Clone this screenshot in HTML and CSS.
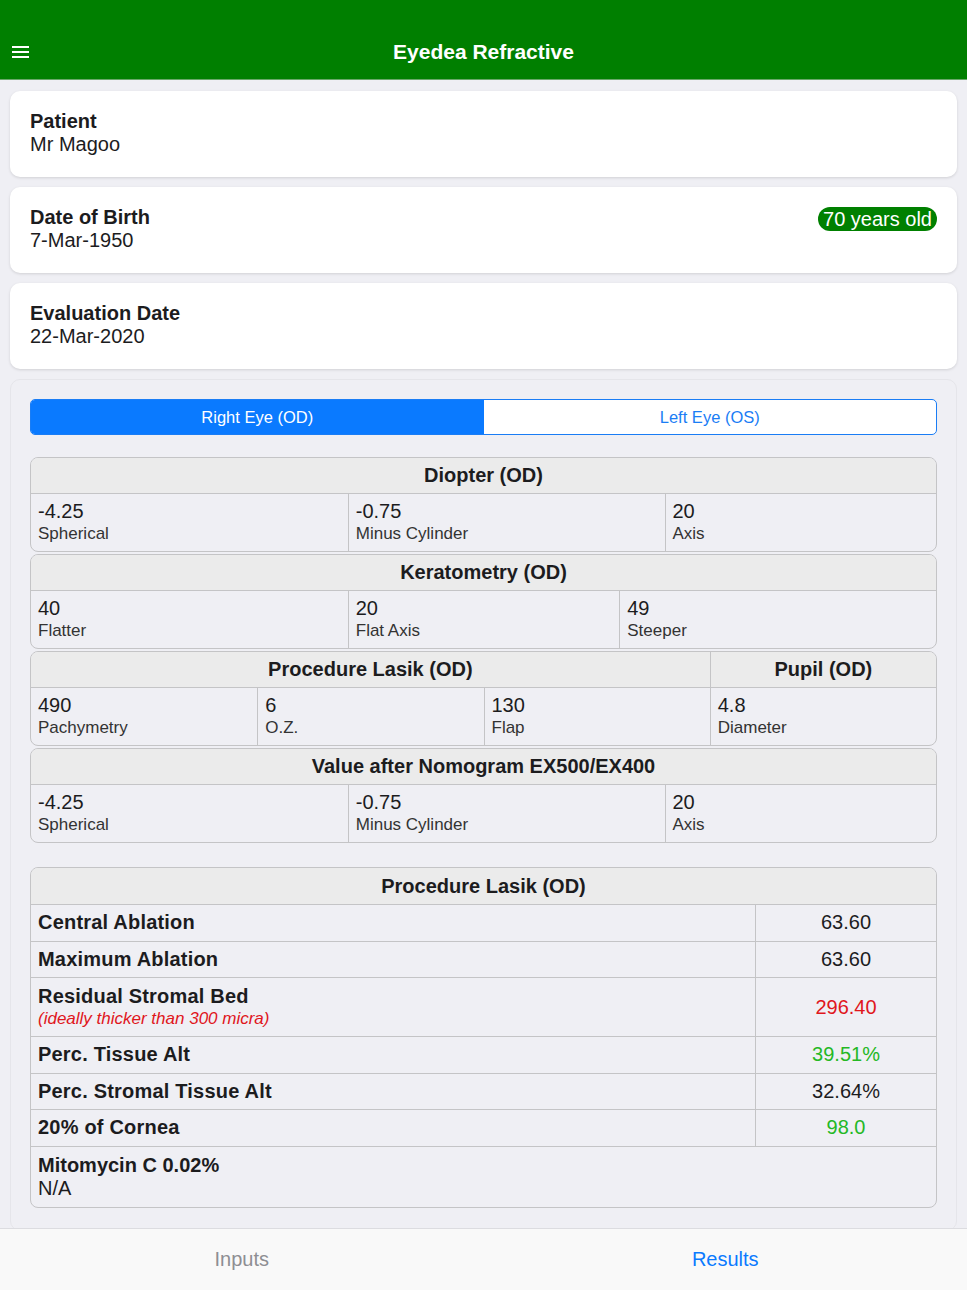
FILE: index.html
```html
<!DOCTYPE html>
<html lang="en">
<head>
<meta charset="utf-8">
<title>Eyedea Refractive</title>
<link rel="stylesheet" href="styles.css">
</head>
<body>
<div class="app">
  <header class="navbar">
    <button class="menu" aria-label="Menu">
      <svg width="17" height="14" viewBox="0 0 17 14"><rect x="0" y="1" width="17" height="2" fill="#fff"/><rect x="0" y="6" width="17" height="2" fill="#fff"/><rect x="0" y="11" width="17" height="2" fill="#fff"/></svg>
    </button>
    <h1 class="title">Eyedea Refractive</h1>
  </header>

  <main class="content">
    <section class="card">
      <div class="card-text">
        <div class="card-label">Patient</div>
        <div class="card-value">Mr Magoo</div>
      </div>
    </section>
    <section class="card">
      <div class="card-text">
        <div class="card-label">Date of Birth</div>
        <div class="card-value">7-Mar-1950</div>
      </div>
      <span class="badge">70 years old</span>
    </section>
    <section class="card">
      <div class="card-text">
        <div class="card-label">Evaluation Date</div>
        <div class="card-value">22-Mar-2020</div>
      </div>
    </section>

    <section class="panel">
      <div class="segment">
        <div class="seg seg-active">Right Eye (OD)</div>
        <div class="seg">Left Eye (OS)</div>
      </div>

      <div class="tables">
        <div class="tbl">
          <div class="tbl-head">Diopter (OD)</div>
          <div class="tbl-row cols-353">
            <div class="cell"><div class="val">-4.25</div><div class="lbl">Spherical</div></div>
            <div class="cell"><div class="val">-0.75</div><div class="lbl">Minus Cylinder</div></div>
            <div class="cell"><div class="val">20</div><div class="lbl">Axis</div></div>
          </div>
        </div>
        <div class="tbl">
          <div class="tbl-head">Keratometry (OD)</div>
          <div class="tbl-row cols-335">
            <div class="cell"><div class="val">40</div><div class="lbl">Flatter</div></div>
            <div class="cell"><div class="val">20</div><div class="lbl">Flat Axis</div></div>
            <div class="cell"><div class="val">49</div><div class="lbl">Steeper</div></div>
          </div>
        </div>
        <div class="tbl">
          <div class="tbl-head split-head">
            <div class="head-part">Procedure Lasik (OD)</div>
            <div class="head-part">Pupil (OD)</div>
          </div>
          <div class="tbl-row cols-4">
            <div class="cell"><div class="val">490</div><div class="lbl">Pachymetry</div></div>
            <div class="cell"><div class="val">6</div><div class="lbl">O.Z.</div></div>
            <div class="cell"><div class="val">130</div><div class="lbl">Flap</div></div>
            <div class="cell"><div class="val">4.8</div><div class="lbl">Diameter</div></div>
          </div>
        </div>
        <div class="tbl">
          <div class="tbl-head">Value after Nomogram EX500/EX400</div>
          <div class="tbl-row cols-353">
            <div class="cell"><div class="val">-4.25</div><div class="lbl">Spherical</div></div>
            <div class="cell"><div class="val">-0.75</div><div class="lbl">Minus Cylinder</div></div>
            <div class="cell"><div class="val">20</div><div class="lbl">Axis</div></div>
          </div>
        </div>
      </div>

      <div class="tbl results">
        <div class="tbl-head">Procedure Lasik (OD)</div>
        <div class="res-row">
          <div class="res-name">Central Ablation</div>
          <div class="res-val">63.60</div>
        </div>
        <div class="res-row">
          <div class="res-name">Maximum Ablation</div>
          <div class="res-val">63.60</div>
        </div>
        <div class="res-row tall">
          <div class="res-name">Residual Stromal Bed<div class="note">(ideally thicker than 300 micra)</div></div>
          <div class="res-val red">296.40</div>
        </div>
        <div class="res-row">
          <div class="res-name">Perc. Tissue Alt</div>
          <div class="res-val green">39.51%</div>
        </div>
        <div class="res-row">
          <div class="res-name">Perc. Stromal Tissue Alt</div>
          <div class="res-val">32.64%</div>
        </div>
        <div class="res-row">
          <div class="res-name">20% of Cornea</div>
          <div class="res-val green">98.0</div>
        </div>
        <div class="res-full">
          <div class="res-full-title">Mitomycin C 0.02%</div>
          <div class="res-full-val">N/A</div>
        </div>
      </div>
    </section>
  </main>

  <nav class="tabbar">
    <div class="tab">Inputs</div>
    <div class="tab tab-active">Results</div>
  </nav>
</div>
</body>
</html>
```

FILE: styles.css
```css
* { box-sizing: border-box; }
html, body { margin: 0; padding: 0; }
body {
  font-family: "Liberation Sans", Arial, sans-serif;
  color: #1c1c1e;
  background: #efeff4;
}
.app {
  width: 967px;
  height: 1290px;
  display: flex;
  flex-direction: column;
  overflow: hidden;
}
.navbar {
  flex: 0 0 auto;
  height: 80px;
  background: #007f00;
  border-bottom: 1px solid #6aa86a;
  padding-top: 24px;
  display: flex;
  align-items: center;
  position: relative;
}
.menu {
  background: none;
  border: 0;
  padding: 0;
  margin-left: 12px;
  width: 17px;
  height: 14px;
  display: flex;
}
.title {
  flex: 1;
  margin: 0 0 0 -29px;
  text-align: center;
  color: #fff;
  font-size: 21px;
  font-weight: bold;
  letter-spacing: 0;
}
.content {
  flex: 1 1 auto;
  overflow: hidden;
  padding: 11px 10px 0;
  display: flex;
  flex-direction: column;
  gap: 10px;
}
.card {
  background: #fff;
  border-radius: 10px;
  box-shadow: 0 1px 3px rgba(0,0,0,0.13);
  padding: 19px 20px;
  display: flex;
  justify-content: space-between;
  align-items: flex-start;
  height: 86px;
  flex: 0 0 auto;
}
.card-label {
  font-weight: bold;
  font-size: 20px;
  line-height: 23px;
  color: #1c1c1e;
}
.card-value {
  font-size: 20px;
  line-height: 23px;
  color: #1c1c1e;
}
.badge {
  background: #008000;
  color: #fff;
  font-size: 20px;
  line-height: 24px;
  padding: 0 5px;
  border-radius: 12px;
  margin-top: 1px;
}
.panel {
  flex: 0 0 auto;
  background: #efeff4;
  border: 1px solid #e5e5ea;
  border-radius: 10px;
  padding: 19px 19px 22px;
  display: flex;
  flex-direction: column;
}
.segment {
  display: flex;
  height: 36px;
  border: 1px solid #1a7df5;
  border-radius: 5px;
  overflow: hidden;
  background: #fff;
}
.seg {
  flex: 1;
  display: flex;
  align-items: center;
  justify-content: center;
  font-size: 16.5px;
  color: #1a7df5;
}
.seg-active {
  background: #0a7aff;
  color: #fff;
}
.tables {
  margin-top: 22px;
  display: flex;
  flex-direction: column;
  gap: 2px;
}
.tbl {
  border: 1px solid #c4c4c6;
  border-radius: 8px;
  overflow: hidden;
  background: #efeff4;
}
.tbl-head {
  background: #ebebeb;
  height: 36px;
  border-bottom: 1px solid #c4c4c6;
  display: flex;
  align-items: center;
  justify-content: center;
  font-weight: bold;
  font-size: 20px;
}
.split-head {
  display: grid;
  grid-template-columns: 75% 25%;
  align-items: stretch;
}
.head-part {
  display: flex;
  align-items: center;
  justify-content: center;
}
.head-part + .head-part { border-left: 1px solid #c4c4c6; }
.tbl-row {
  display: grid;
  height: 57px;
}
.cols-353 { grid-template-columns: 35% 35% 30%; }
.cols-335 { grid-template-columns: 35% 30% 35%; }
.cols-4 { grid-template-columns: 25% 25% 25% 25%; }
.cell {
  padding: 6px 7px;
}
.cell + .cell { border-left: 1px solid #c4c4c6; }
.val {
  font-size: 20px;
  line-height: 23px;
  color: #1c1c1e;
}
.lbl {
  font-size: 17px;
  line-height: 22px;
  color: #333;
}
.results {
  margin-top: 24px;
}
.results .tbl-head { height: 37px; }
.res-row {
  display: grid;
  grid-template-columns: 80% 20%;
  min-height: 36.5px;
  border-bottom: 1px solid #c4c4c6;
}
.res-row.tall { min-height: 59px; }
.res-name {
  font-weight: bold;
  font-size: 20px;
  line-height: 23px;
  padding: 6px 7px;
  display: flex;
  flex-direction: column;
  justify-content: center;
  letter-spacing: 0.2px;
}
.note {
  font-weight: normal;
  font-style: italic;
  font-size: 17px;
  line-height: 22px;
  color: #e0161c;
  letter-spacing: 0;
}
.res-val {
  border-left: 1px solid #c4c4c6;
  display: flex;
  align-items: center;
  justify-content: center;
  font-size: 20px;
  color: #1c1c1e;
}
.red { color: #e0161c; }
.green { color: #24b824; }
.res-full {
  padding: 7px 7px 7px;
  height: 60px;
}
.res-full-title {
  font-weight: bold;
  font-size: 20px;
  line-height: 23px;
}
.res-full-val {
  font-size: 20px;
  line-height: 23px;
}
.tabbar {
  flex: 0 0 62px;
  background: #f9f9f9;
  border-top: 1px solid #dcdce0;
  display: flex;
}
.tab {
  flex: 1;
  display: flex;
  align-items: center;
  justify-content: center;
  font-size: 20px;
  color: #8e8e93;
}
.tab-active { color: #0a7aff; }
```
